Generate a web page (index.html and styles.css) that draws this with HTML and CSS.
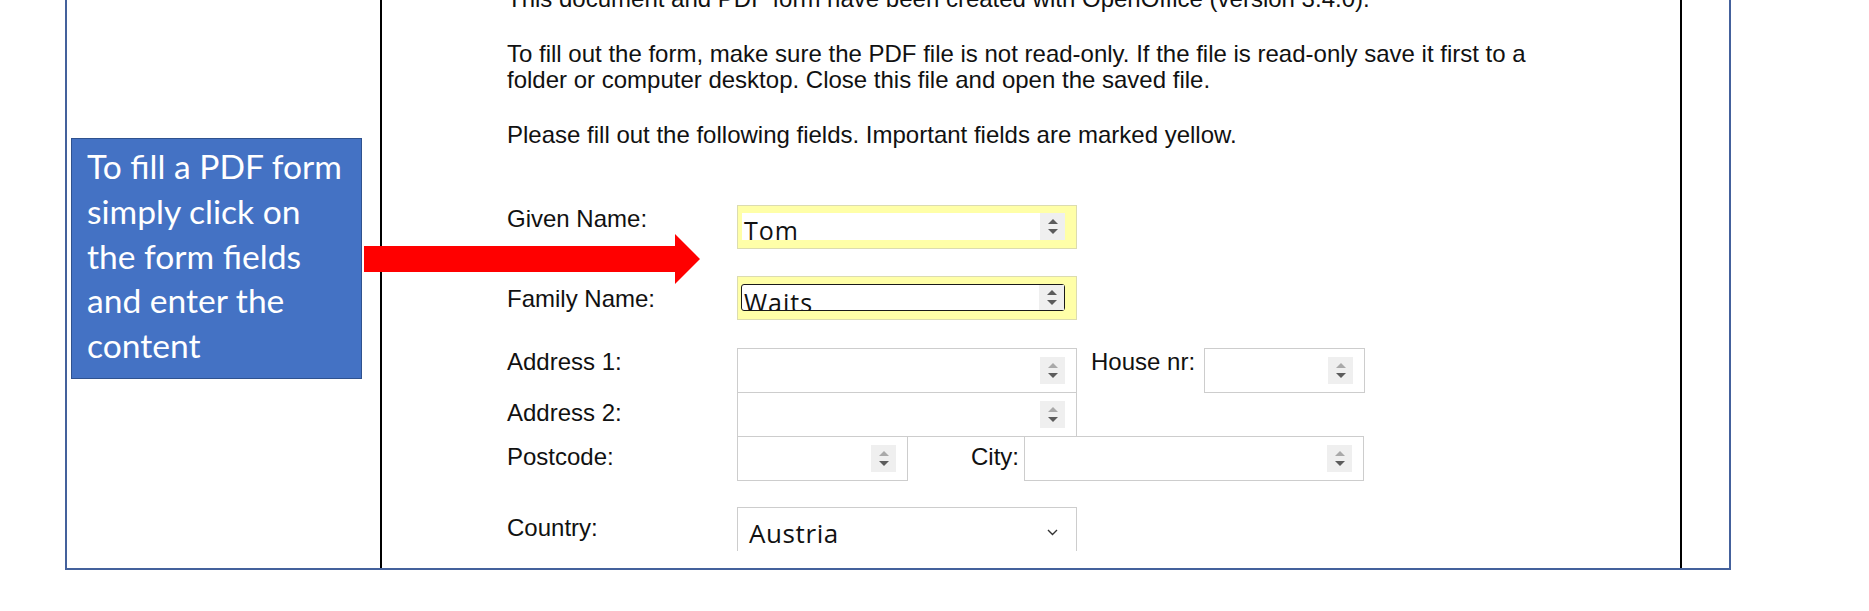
FILE: index.html
```html
<!DOCTYPE html>
<html lang="en">
<head>
  <meta charset="UTF-8">
  <meta name="viewport" content="width=device-width, initial-scale=1.0">
  <title>Fill a PDF form</title>
  <link rel="stylesheet" href="styles.css">
</head>
<body>

  <div class="frame">
    <div class="side">
      <div class="callout">To fill a PDF form<br>simply click on<br>the form fields<br>and enter the<br>content</div>
    </div>

    <div class="page">
      <p>This document and PDF form have been created with OpenOffice (version 3.4.0).</p>
      <p>To fill out the form, make sure the PDF file is not read-only. If the file is read-only save it first to a<br>folder or computer desktop. Close this file and open the saved file.</p>
      <p class="intro-last">Please fill out the following fields. Important fields are marked yellow.</p>

      <div class="form">
        <div class="row">
          <span class="label">Given Name:</span>
          <div class="field yellow">
            <div class="box"><span class="value">Tom</span><span class="spin dark"><i class="up"></i><i class="down"></i></span></div>
          </div>
        </div>

        <div class="row row-family">
          <span class="label low">Family Name:</span>
          <div class="field yellow">
            <div class="box focused"><span class="value">Waits</span><span class="spin dark"><i class="up"></i><i class="down"></i></span></div>
          </div>
        </div>

        <div class="row row-address">
          <span class="label">Address 1:</span>
          <div class="field tall">
            <div class="box"><span class="value"></span><span class="spin"><i class="up"></i><i class="down"></i></span></div>
          </div>
          <span class="label inline house-label">House nr:</span>
          <div class="field tall house">
            <div class="box"><span class="value"></span><span class="spin"><i class="up"></i><i class="down"></i></span></div>
          </div>
        </div>

        <div class="row stacked">
          <span class="label mid">Address 2:</span>
          <div class="field tall">
            <div class="box"><span class="value"></span><span class="spin"><i class="up"></i><i class="down"></i></span></div>
          </div>
        </div>

        <div class="row stacked">
          <span class="label mid">Postcode:</span>
          <div class="field tall postcode">
            <div class="box"><span class="value"></span><span class="spin"><i class="up"></i><i class="down"></i></span></div>
          </div>
          <span class="label inline mid city-label">City:</span>
          <div class="field tall">
            <div class="box"><span class="value"></span><span class="spin"><i class="up"></i><i class="down"></i></span></div>
          </div>
        </div>

        <div class="row row-country">
          <span class="label mid">Country:</span>
          <div class="select">
            <span class="select-value">Austria</span>
            <svg class="chevron" width="11" height="7" viewBox="0 0 11 7"><polyline points="1,1 5.5,5.5 10,1" fill="none" stroke="#333" stroke-width="1.4"/></svg>
          </div>
        </div>
      </div>
    </div>

    <div class="side-right"></div>

    <!-- red pointer from the callout to the first field -->
    <svg class="arrow" width="337" height="52" viewBox="0 0 337 52">
      <polygon points="0,13 311,13 311,1 336,26 311,51 311,39 0,39" fill="#ff0000"/>
    </svg>
  </div>

</body>
</html>
```

FILE: styles.css
```css
body {
  margin: 0;
  background: #ffffff;
  font-family: "Liberation Sans", Arial, sans-serif;
  color: #111;
  overflow: hidden;
}

.frame {
  position: relative;
  display: flex;
  box-sizing: border-box;
  width: 1666px;
  height: 590px;
  margin: -20px 0 0 65px;
  border: 2px solid #44619c;
}

.side {
  width: 313px;
  flex-shrink: 0;
}

.callout {
  box-sizing: border-box;
  width: 291px;
  height: 241px;
  margin: 156px 0 0 4px;
  padding: 5px 0 0 15px;
  background: #4472c4;
  border: 1.5px solid #2f528f;
  color: #ffffff;
  font-family: Lato, "Open Sans", sans-serif;
  font-size: 33.6px;
  line-height: 44.8px;
  white-space: nowrap;
}

.page {
  box-sizing: border-box;
  width: 1302px;
  flex-shrink: 0;
  border-left: 2px solid #000;
  border-right: 2px solid #000;
  padding: 4px 0 0 125px;
}

.side-right {
  flex: 1;
}

.page p {
  margin: 0 0 29px;
  font-size: 24px;
  line-height: 26px;
  white-space: nowrap;
}

.page p.intro-last {
  margin-bottom: 57px;
}

/* form rows */
.row {
  display: flex;
  align-items: flex-start;
}

.row-family {
  margin-top: 27px;
}

.row-address {
  margin-top: 28px;
}

.row.stacked {
  margin-top: -1px;
}

.row-country {
  margin-top: 26px;
}

.label {
  width: 230px;
  flex-shrink: 0;
  margin-top: 1px;
  font-size: 24px;
  line-height: 26px;
  white-space: nowrap;
}

.label.low {
  margin-top: 10px;
}

.label.mid {
  margin-top: 8px;
}

.label.inline {
  width: auto;
}

.house-label {
  margin-left: 14px;
  margin-right: 9px;
}

.city-label {
  margin-left: 63px;
  margin-right: 5px;
}

/* fields */
.field {
  box-sizing: border-box;
  width: 340px;
  height: 44px;
  padding: 7px 11px 8px 4px;
  border: 1px solid #cdcdcd;
  background: #ffffff;
}

.field.tall {
  height: 45px;
  padding: 8px 11px 8px 4px;
}

.field.yellow {
  background: #ffffa8;
  border-color: #dcdcb0;
}

.field.house {
  width: 161px;
}

.field.postcode {
  width: 171px;
}

.box {
  display: flex;
  height: 100%;
  box-sizing: border-box;
  background: #ffffff;
}

.box.focused {
  margin-left: -1px;
  border: 1.5px solid #1a1a1a;
  border-radius: 3px;
}

.value {
  flex: 1;
  overflow: hidden;
  padding-left: 2px;
  font-family: "Open Sans", sans-serif;
  font-size: 25px;
  line-height: 34px;
  letter-spacing: 1px;
  color: #111;
}

.spin {
  width: 25px;
  display: flex;
  flex-direction: column;
  align-items: center;
  justify-content: center;
  gap: 5px;
  background: #efefef;
}

.spin i {
  width: 0;
  height: 0;
  border-left: 5px solid transparent;
  border-right: 5px solid transparent;
}

.spin .up {
  border-bottom: 5px solid #a9a9a9;
}

.spin .down {
  border-top: 5px solid #5c5c5c;
}

.spin.dark .up {
  border-bottom-color: #5c5c5c;
}

/* country dropdown */
.select {
  box-sizing: border-box;
  width: 340px;
  height: 44px;
  display: flex;
  justify-content: space-between;
  align-items: flex-start;
  padding: 5px 18px 0 11px;
  border: 1px solid #cdcdcd;
  border-bottom: none;
}

.select-value {
  font-family: "Open Sans", sans-serif;
  font-size: 26px;
  line-height: 40px;
  letter-spacing: 0.6px;
}

.chevron {
  margin-top: 16px;
}

.arrow {
  position: absolute;
  left: 297px;
  top: 251px;
}
```
